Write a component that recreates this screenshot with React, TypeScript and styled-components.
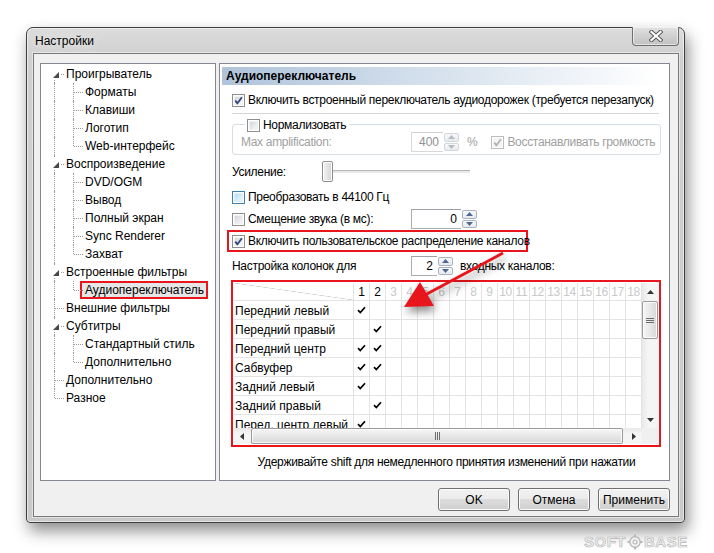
import React from 'react';
import styled, { createGlobalStyle } from 'styled-components';

// Диалог «Настройки» (Windows 7) — страница «Аудиопереключатель»

const RED = '#e8161c';
const UI_FONT = '"Liberation Sans", "Noto Sans", Arial, sans-serif';

const GlobalStyle = createGlobalStyle`
  html, body {
    margin: 0;
    padding: 0;
    background: #fff;
  }
  body {
    font-family: ${UI_FONT};
    font-size: 12px;
    color: #000;
  }
`;

const Page = styled.div`
  position: relative;
  width: 714px;
  height: 553px;
  overflow: hidden;
  box-sizing: border-box;
  padding: 27px 0 0 26px;
`;

const Window = styled.div`
  width: 659px;
  height: 496px;
  box-sizing: border-box;
  display: flex;
  flex-direction: column;
  border: 1px solid #3e3e3e;
  border-radius: 7px 7px 4px 4px;
  background: linear-gradient(180deg, #dcdcdc 0%, #d0d0d0 30px, #cacaca 100%);
  box-shadow: 3px 8px 16px rgba(0, 0, 0, 0.45),
    inset 0 0 0 1px rgba(255, 255, 255, 0.55);
`;

const TitleBar = styled.div`
  height: 25px;
  display: flex;
  align-items: flex-start;
  padding-left: 8px;
`;

const Title = styled.span`
  line-height: 26px;
  font-size: 12px;
  text-shadow: 0 0 8px rgba(255, 255, 255, 0.9);
`;

const CloseButton = styled.div`
  margin: -1px 5px 0 auto;
  width: 47px;
  height: 19px;
  box-sizing: border-box;
  display: flex;
  align-items: center;
  justify-content: center;
  border: 1px solid #6f6f6f;
  border-top: none;
  border-radius: 0 0 4px 4px;
  background: linear-gradient(180deg, #e2e2e2 0%, #d0d0d0 50%, #c2c2c2 100%);
  box-shadow: inset 0 0 0 1px rgba(255, 255, 255, 0.55);
`;

const Client = styled.div`
  flex: 1;
  margin: 0 5px 5px 6px;
  display: flex;
  flex-direction: column;
  padding: 9px 8px 0 6px;
  background: #f0f0f0;
  border: 1px solid #7a7a7a;
  box-shadow: 0 0 0 1px rgba(255, 255, 255, 0.45);
`;

const Body = styled.div`
  display: flex;
  gap: 3px;
  height: 418px;
`;

/* ---------- дерево ---------- */

const TreePanel = styled.div`
  width: 176px;
  box-sizing: border-box;
  border: 1px solid #828790;
  background: #fff;
  padding: 1px 0 0 4px;
`;

const TreeRow = styled.div`
  display: flex;
  align-items: center;
  height: 18px;
`;

type SegKind = 'pipe' | 'tee' | 'ell' | 'first';

const Seg = styled.span<{ $kind: SegKind }>`
  position: relative;
  flex: none;
  width: 19px;
  height: 18px;

  &::before {
    content: '';
    position: absolute;
    left: 9px;
    top: ${(p) => (p.$kind === 'first' ? '9px' : '0')};
    bottom: ${(p) => (p.$kind === 'ell' ? '9px' : '0')};
    border-left: 1px dotted #9a9a9a;
  }

  &::after {
    content: '';
    display: ${(p) => (p.$kind === 'pipe' ? 'none' : 'block')};
    position: absolute;
    left: 10px;
    top: 9px;
    width: 9px;
    border-top: 1px dotted #9a9a9a;
  }
`;

const Expander = styled.span`
  position: absolute;
  z-index: 1;
  left: 4px;
  top: 3px;
  width: 11px;
  height: 11px;
  background: #fff;

  &::after {
    content: '';
    position: absolute;
    left: 4px;
    top: 4px;
    width: 6px;
    height: 6px;
    background: #474747;
    clip-path: polygon(100% 0, 100% 100%, 0 100%);
  }
`;

const TreeLabel = styled.span<{ $selected?: boolean }>`
  white-space: nowrap;
  line-height: 14px;
  margin-left: ${(p) => (p.$selected ? '-3px' : '2px')};
  padding: ${(p) => (p.$selected ? '0 2px 0 3px' : '0')};
  border: ${(p) => (p.$selected ? `2px solid ${RED}` : 'none')};
  background: ${(p) => (p.$selected ? '#e6e6e6' : 'transparent')};
`;

interface TreeItem {
  label: string;
  segs: SegKind[];
  expander?: boolean;
  selected?: boolean;
}

const treeItems: TreeItem[] = [
  { label: 'Проигрыватель', segs: ['first'], expander: true },
  { label: 'Форматы', segs: ['pipe', 'tee'] },
  { label: 'Клавиши', segs: ['pipe', 'tee'] },
  { label: 'Логотип', segs: ['pipe', 'tee'] },
  { label: 'Web-интерфейс', segs: ['pipe', 'ell'] },
  { label: 'Воспроизведение', segs: ['tee'], expander: true },
  { label: 'DVD/OGM', segs: ['pipe', 'tee'] },
  { label: 'Вывод', segs: ['pipe', 'tee'] },
  { label: 'Полный экран', segs: ['pipe', 'tee'] },
  { label: 'Sync Renderer', segs: ['pipe', 'tee'] },
  { label: 'Захват', segs: ['pipe', 'ell'] },
  { label: 'Встроенные фильтры', segs: ['tee'], expander: true },
  { label: 'Аудиопереключатель', segs: ['pipe', 'ell'], selected: true },
  { label: 'Внешние фильтры', segs: ['tee'] },
  { label: 'Субтитры', segs: ['tee'], expander: true },
  { label: 'Стандартный стиль', segs: ['pipe', 'tee'] },
  { label: 'Дополнительно', segs: ['pipe', 'ell'] },
  { label: 'Дополнительно', segs: ['tee'] },
  { label: 'Разное', segs: ['ell'] },
];

/* ---------- правая страница ---------- */

const PagePanel = styled.div`
  width: 451px;
  box-sizing: border-box;
  border: 1px solid #828790;
  background: #fff;
  padding: 3px 8px 0 2px;
  display: flex;
  flex-direction: column;
`;

const PageHeader = styled.div`
  height: 18px;
  padding-left: 4px;
  display: flex;
  align-items: center;
  font-weight: 700;
  background: linear-gradient(90deg, #afc3da 0%, #d3dfec 45%, #ffffff 100%);
`;

const Section = styled.div`
  display: flex;
  flex-direction: column;
  padding-left: 10px;
  letter-spacing: -0.3px;
`;

const Row = styled.div<{ $top: number; $h?: number }>`
  display: flex;
  align-items: center;
  margin-top: ${(p) => p.$top}px;
  height: ${(p) => p.$h ?? 16}px;
  white-space: nowrap;
`;

const Separator = styled.div`
  margin: 5px 2px 0 0;
  border-top: 1px solid #d5d5d5;
  border-bottom: 1px solid #fff;
`;

const GroupBox = styled.div`
  position: relative;
  margin-top: 9px;
  height: 31px;
  box-sizing: border-box;
  border: 1px solid #d5dfe5;
  border-radius: 3px;
  padding: 7px 0 0 8px;
`;

const GroupLegend = styled.div`
  position: absolute;
  left: 12px;
  top: -7px;
  padding: 0 3px 0 2px;
  background: #fff;
  display: flex;
  align-items: center;
  height: 14px;
`;

const Text = styled.span<{ $disabled?: boolean; $width?: number; $gap?: number }>`
  color: ${(p) => (p.$disabled ? '#a0a0a0' : '#000')};
  width: ${(p) => (p.$width ? `${p.$width}px` : 'auto')};
  margin-left: ${(p) => p.$gap ?? 0}px;
  flex: none;
`;

const CheckField = styled.span<{ $width?: number }>`
  flex: none;
  display: flex;
  align-items: center;
  width: ${(p) => (p.$width ? `${p.$width}px` : 'auto')};
`;

type BoxState = 'normal' | 'hover' | 'disabled';

const CheckBoxBox = styled.span<{ $state: BoxState }>`
  position: relative;
  flex: none;
  width: 13px;
  height: 13px;
  box-sizing: border-box;
  border: 1px solid
    ${(p) =>
      p.$state === 'hover' ? '#3c7fb1' : p.$state === 'disabled' ? '#bdbdbd' : '#8e8f8f'};
  background: #fff;

  &::before {
    content: '';
    position: absolute;
    inset: 1px;
    background: ${(p) =>
      p.$state === 'hover'
        ? 'linear-gradient(135deg, #b9dff6 0%, #e8f6fd 100%)'
        : p.$state === 'disabled'
          ? '#f4f4f4'
          : 'linear-gradient(135deg, #d4d7dc 0%, #f7f7f7 100%)'};
    border: 1px solid
      ${(p) => (p.$state === 'hover' ? '#deeffa' : p.$state === 'disabled' ? '#f4f4f4' : '#f1f1f1')};
  }

  svg {
    position: absolute;
    left: 1px;
    top: 1px;
  }
`;

const CheckLabel = styled.span<{ $disabled?: boolean }>`
  margin-left: 3px;
  color: ${(p) => (p.$disabled ? '#a0a0a0' : '#000')};
`;

const CheckBox: React.FC<{ checked?: boolean; state?: BoxState }> = ({
  checked,
  state = 'normal',
}) => (
  <CheckBoxBox $state={state}>
    {checked && (
      <svg width='9' height='9' viewBox='0 0 9 9'>
        <path
          d='M1.2 4.6 L3.4 7.2 L7.9 1.2'
          fill='none'
          stroke={state === 'disabled' ? '#b3b3b3' : '#33477f'}
          strokeWidth='1.8'
        />
      </svg>
    )}
  </CheckBoxBox>
);

const SpinWrap = styled.span<{ $width: number }>`
  flex: none;
  display: flex;
  width: ${(p) => p.$width}px;
  height: 20px;
  gap: 1px;
  letter-spacing: 0;
`;

const SpinEdit = styled.span<{ $disabled?: boolean }>`
  flex: 1;
  box-sizing: border-box;
  border: 1px solid ${(p) => (p.$disabled ? '#d9d9d9' : '#abadb3')};
  border-top-color: ${(p) => (p.$disabled ? '#cfcfcf' : '#9da0aa')};
  border-right: none;
  display: flex;
  align-items: center;
  justify-content: flex-end;
  padding-right: 4px;
  color: ${(p) => (p.$disabled ? '#909090' : '#000')};
`;

const SpinButtons = styled.span`
  width: 15px;
  display: flex;
  flex-direction: column;
  gap: 1px;
  padding: 1px 0;
`;

const SpinButton = styled.span<{ $disabled?: boolean }>`
  flex: 1;
  box-sizing: border-box;
  display: flex;
  align-items: center;
  justify-content: center;
  border: 1px solid ${(p) => (p.$disabled ? '#d3d6da' : '#a8b3c2')};
  border-radius: 2px;
  background: linear-gradient(180deg, #f7f8fa 0%, #e7eaee 100%);
`;

const Spin: React.FC<{ value: string; width: number; disabled?: boolean }> = ({
  value,
  width,
  disabled,
}) => {
  const glyph = disabled ? '#b5bcc6' : '#4f6890';
  return (
    <SpinWrap $width={width}>
      <SpinEdit $disabled={disabled}>{value}</SpinEdit>
      <SpinButtons>
        <SpinButton $disabled={disabled}>
          <svg width='7' height='4' viewBox='0 0 7 4'>
            <polygon points='0,4 3.5,0 7,4' fill={glyph} />
          </svg>
        </SpinButton>
        <SpinButton $disabled={disabled}>
          <svg width='7' height='4' viewBox='0 0 7 4'>
            <polygon points='0,0 7,0 3.5,4' fill={glyph} />
          </svg>
        </SpinButton>
      </SpinButtons>
    </SpinWrap>
  );
};

const SliderTrack = styled.span`
  position: relative;
  flex: none;
  width: 148px;
  height: 21px;

  &::before {
    content: '';
    position: absolute;
    left: 4px;
    right: 0;
    top: 9px;
    height: 2px;
    border-top: 1px solid #b6b6b6;
    background: #e9e9e9;
  }
`;

const SliderThumb = styled.span`
  position: absolute;
  left: 0;
  top: 0;
  width: 11px;
  height: 21px;
  box-sizing: border-box;
  border: 1px solid #8e8f8f;
  border-radius: 2px;
  background: linear-gradient(90deg, #f4f4f4 0%, #e4e4e4 50%, #d4d4d4 100%);
  box-shadow: inset 0 0 0 1px #fff;
`;

const RedRow = styled.div`
  margin: 1px 0 0 -5px;
  width: 301px;
  height: 22px;
  box-sizing: border-box;
  border: 2px solid ${RED};
  padding-left: 3px;
  display: flex;
  align-items: center;
  white-space: nowrap;
`;

/* ---------- таблица каналов ---------- */

const GridFrame = styled.div`
  margin: 4px 0 0 -1px;
  width: 430px;
  height: 167px;
  box-sizing: border-box;
  border: 2px solid ${RED};
  padding: 1px;
  display: grid;
  grid-template-columns: 408px 16px;
  grid-template-rows: 145px 16px;
  letter-spacing: 0;
`;

const MatrixArea = styled.div`
  overflow: hidden;
  display: grid;
  grid-template-columns: 120px repeat(18, 16px);
  grid-template-rows: 18px;
  grid-auto-rows: 19px;
`;

const Cell = styled.div<{ $muted?: boolean }>`
  box-sizing: border-box;
  border-right: 1px solid #e3e3e3;
  border-bottom: 1px solid #e3e3e3;
  display: flex;
  align-items: center;
  justify-content: center;
  color: ${(p) => (p.$muted ? '#c9c9c9' : '#000')};
  font-size: 12px;
  letter-spacing: -0.3px;
`;

const NameCell = styled(Cell)`
  justify-content: flex-start;
  align-items: flex-start;
  padding: 3px 0 0 1px;
  white-space: nowrap;
  letter-spacing: 0;
`;

const CornerCell = styled(Cell)`
  background: linear-gradient(
    to top right,
    transparent calc(50% - 0.6px),
    #cfcfcf 50%,
    transparent calc(50% + 0.6px)
  );
`;

const VScroll = styled.div`
  display: flex;
  flex-direction: column;
  background: linear-gradient(90deg, #e9e9e9 0%, #f5f5f5 40%, #f5f5f5 100%);
`;

const HScroll = styled.div`
  display: flex;
  background: linear-gradient(180deg, #e9e9e9 0%, #f5f5f5 40%, #f5f5f5 100%);
`;

const ScrollArrow = styled.div<{ $size: number }>`
  flex: none;
  width: 16px;
  height: 16px;
  ${(p) => `flex-basis: ${p.$size}px;`}
  display: flex;
  align-items: center;
  justify-content: center;
`;

const VThumb = styled.div`
  flex: none;
  margin: 1px 0 0 0;
  height: 38px;
  box-sizing: border-box;
  border: 1px solid #9b9b9b;
  border-radius: 2px;
  background: linear-gradient(90deg, #f5f5f5 0%, #e8e8e8 50%, #d7d7d7 100%);
  box-shadow: inset 0 0 0 1px rgba(255, 255, 255, 0.8);
  display: flex;
  align-items: center;
  justify-content: center;
`;

const HThumb = styled.div`
  flex: none;
  width: 372px;
  margin: 0 2px 0 1px;
  box-sizing: border-box;
  border: 1px solid #9b9b9b;
  border-radius: 2px;
  background: linear-gradient(180deg, #f5f5f5 0%, #e8e8e8 50%, #d7d7d7 100%);
  box-shadow: inset 0 0 0 1px rgba(255, 255, 255, 0.8);
  display: flex;
  align-items: center;
  justify-content: center;
`;

const Spacer = styled.div`
  flex: 1;
`;

const Corner = styled.div`
  background: #f0f0f0;
`;

const Hint = styled.div`
  margin-top: 8px;
  line-height: 14px;
  text-align: center;
  white-space: nowrap;
`;

/* ---------- кнопки ---------- */

const Footer = styled.div`
  display: flex;
  justify-content: flex-end;
  gap: 8px;
  margin-top: 7px;
`;

const DialogButton = styled.div`
  width: 72px;
  height: 23px;
  box-sizing: border-box;
  display: flex;
  align-items: center;
  justify-content: center;
  border: 1px solid #707070;
  border-radius: 3px;
  background: linear-gradient(180deg, #f2f2f2 0%, #ebebeb 49%, #dddddd 50%, #cfcfcf 100%);
  box-shadow: inset 0 0 0 1px #fcfcfc;
`;

/* ---------- аннотации ---------- */

const Annotation = styled.svg`
  position: absolute;
  left: 0;
  top: 0;
  pointer-events: none;
  filter: drop-shadow(2px 5px 4px rgba(0, 0, 0, 0.45));
`;

const Watermark = styled.div`
  position: absolute;
  left: 584px;
  top: 533px;
  display: flex;
  align-items: center;
  gap: 1px;
  font-family: "Liberation Sans", Arial, sans-serif;
  font-weight: 700;
  font-size: 15px;
  letter-spacing: 0.5px;
  color: #f3f3f3;
  -webkit-text-stroke: 0.7px #b9b9b9;
`;

const channels: { name: string; checks: number[] }[] = [
  { name: 'Передний левый', checks: [1] },
  { name: 'Передний правый', checks: [2] },
  { name: 'Передний центр', checks: [1, 2] },
  { name: 'Сабвуфер', checks: [1, 2] },
  { name: 'Задний левый', checks: [1] },
  { name: 'Задний правый', checks: [2] },
  { name: 'Перед. центр левый', checks: [1] },
];

const columns = Array.from({ length: 18 }, (_, i) => i + 1);

const Tick = () => (
  <svg width='9' height='8' viewBox='0 0 9 8'>
    <path d='M1 4.2 L3.3 6.6 L8 1.2' fill='none' stroke='#000' strokeWidth='1.7' />
  </svg>
);

const Grip: React.FC<{ vertical?: boolean }> = ({ vertical }) =>
  vertical ? (
    <svg width='8' height='7' viewBox='0 0 8 7'>
      <path d='M0 1.5H8M0 3.5H8M0 5.5H8' stroke='#6d6d6d' strokeWidth='1' />
    </svg>
  ) : (
    <svg width='7' height='8' viewBox='0 0 7 8'>
      <path d='M1.5 0V8M3.5 0V8M5.5 0V8' stroke='#6d6d6d' strokeWidth='1' />
    </svg>
  );

export default function App() {
  return (
    <>
      <GlobalStyle />
      <Page>
        <Window>
          <TitleBar>
            <Title>Настройки</Title>
            <CloseButton>
              <svg width='14' height='12' viewBox='0 0 14 12'>
                <path
                  d='M2.5 2 L11.5 10 M11.5 2 L2.5 10'
                  stroke='#5a5a5a'
                  strokeWidth='4.2'
                  strokeLinecap='square'
                />
                <path
                  d='M2.5 2 L11.5 10 M11.5 2 L2.5 10'
                  stroke='#ffffff'
                  strokeWidth='2.2'
                  strokeLinecap='square'
                />
              </svg>
            </CloseButton>
          </TitleBar>

          <Client>
            <Body>
              <TreePanel>
                {treeItems.map((item, i) => (
                  <TreeRow key={i}>
                    {item.segs.map((kind, j) => (
                      <Seg key={j} $kind={kind}>
                        {item.expander && j === item.segs.length - 1 && <Expander />}
                      </Seg>
                    ))}
                    <TreeLabel $selected={item.selected}>{item.label}</TreeLabel>
                  </TreeRow>
                ))}
              </TreePanel>

              <PagePanel>
                <PageHeader>Аудиопереключатель</PageHeader>
                <Section>
                  <Row $top={7}>
                    <CheckBox checked />
                    <CheckLabel>
                      Включить встроенный переключатель аудиодорожек (требуется перезапуск)
                    </CheckLabel>
                  </Row>
                  <Separator />

                  <GroupBox>
                    <GroupLegend>
                      <CheckBox />
                      <CheckLabel>Нормализовать</CheckLabel>
                    </GroupLegend>
                    <Row $top={0} $h={20}>
                      <Text $disabled $width={170}>
                        Max amplification:
                      </Text>
                      <Spin value='400' width={48} disabled />
                      <Text $disabled $gap={8}>
                        %
                      </Text>
                      <Text $gap={14} />
                      <CheckBox checked state='disabled' />
                      <CheckLabel $disabled>Восстанавливать громкость</CheckLabel>
                    </Row>
                  </GroupBox>

                  <Row $top={6} $h={21}>
                    <Text $width={90}>Усиление:</Text>
                    <SliderTrack>
                      <SliderThumb />
                    </SliderTrack>
                  </Row>

                  <Row $top={7}>
                    <CheckBox state='hover' />
                    <CheckLabel>Преобразовать в 44100 Гц</CheckLabel>
                  </Row>

                  <Row $top={4} $h={20}>
                    <CheckField $width={179}>
                      <CheckBox />
                      <CheckLabel>Смещение звука (в мс):</CheckLabel>
                    </CheckField>
                    <Spin value='0' width={66} />
                  </Row>

                  <RedRow>
                    <CheckBox checked />
                    <CheckLabel>Включить пользовательское распределение каналов</CheckLabel>
                  </RedRow>

                  <Row $top={4} $h={20}>
                    <Text $width={179}>Настройка колонок для</Text>
                    <Spin value='2' width={42} />
                    <Text $gap={7}>входных каналов:</Text>
                  </Row>

                  <GridFrame>
                    <MatrixArea>
                      <CornerCell />
                      {columns.map((c) => (
                        <Cell key={c} $muted={c > 2}>
                          {c}
                        </Cell>
                      ))}
                      {channels.map((ch) => (
                        <React.Fragment key={ch.name}>
                          <NameCell>{ch.name}</NameCell>
                          {columns.map((c) => (
                            <Cell key={c}>{ch.checks.includes(c) && <Tick />}</Cell>
                          ))}
                        </React.Fragment>
                      ))}
                    </MatrixArea>
                    <VScroll>
                      <ScrollArrow $size={17}>
                        <svg width='7' height='4' viewBox='0 0 7 4'>
                          <polygon points='0,4 3.5,0 7,4' fill='#333' />
                        </svg>
                      </ScrollArrow>
                      <VThumb>
                        <Grip vertical />
                      </VThumb>
                      <Spacer />
                      <ScrollArrow $size={16}>
                        <svg width='7' height='4' viewBox='0 0 7 4'>
                          <polygon points='0,0 7,0 3.5,4' fill='#333' />
                        </svg>
                      </ScrollArrow>
                    </VScroll>
                    <HScroll>
                      <ScrollArrow $size={16}>
                        <svg width='4' height='7' viewBox='0 0 4 7'>
                          <polygon points='4,0 4,7 0,3.5' fill='#333' />
                        </svg>
                      </ScrollArrow>
                      <HThumb>
                        <Grip />
                      </HThumb>
                      <Spacer />
                      <ScrollArrow $size={16}>
                        <svg width='4' height='7' viewBox='0 0 4 7'>
                          <polygon points='0,0 4,3.5 0,7' fill='#333' />
                        </svg>
                      </ScrollArrow>
                    </HScroll>
                    <Corner />
                  </GridFrame>

                  <Hint>Удерживайте shift для немедленного принятия изменений при нажатии</Hint>
                </Section>
              </PagePanel>
            </Body>

            <Footer>
              <DialogButton>OK</DialogButton>
              <DialogButton>Отмена</DialogButton>
              <DialogButton>Применить</DialogButton>
            </Footer>
          </Client>
        </Window>

        <Annotation width='714' height='553' viewBox='0 0 714 553'>
          <line x1='503' y1='253' x2='425' y2='295' stroke={RED} strokeWidth='3' />
          <polygon points='404,307 420,282 434,306' fill={RED} />
        </Annotation>

        <Watermark>
          <span>SOFT</span>
          <svg width='16' height='16' viewBox='0 0 16 16'>
            <circle cx='8' cy='8' r='5.2' fill='#f3f3f3' stroke='#b9b9b9' strokeWidth='1.4' />
            <circle cx='8' cy='8' r='2' fill='none' stroke='#b9b9b9' strokeWidth='1.2' />
            <path d='M8 0.5V3M8 13V15.5M0.5 8H3M13 8H15.5' stroke='#b9b9b9' strokeWidth='2' />
          </svg>
          <span>BASE</span>
        </Watermark>
      </Page>
    </>
  );
}
